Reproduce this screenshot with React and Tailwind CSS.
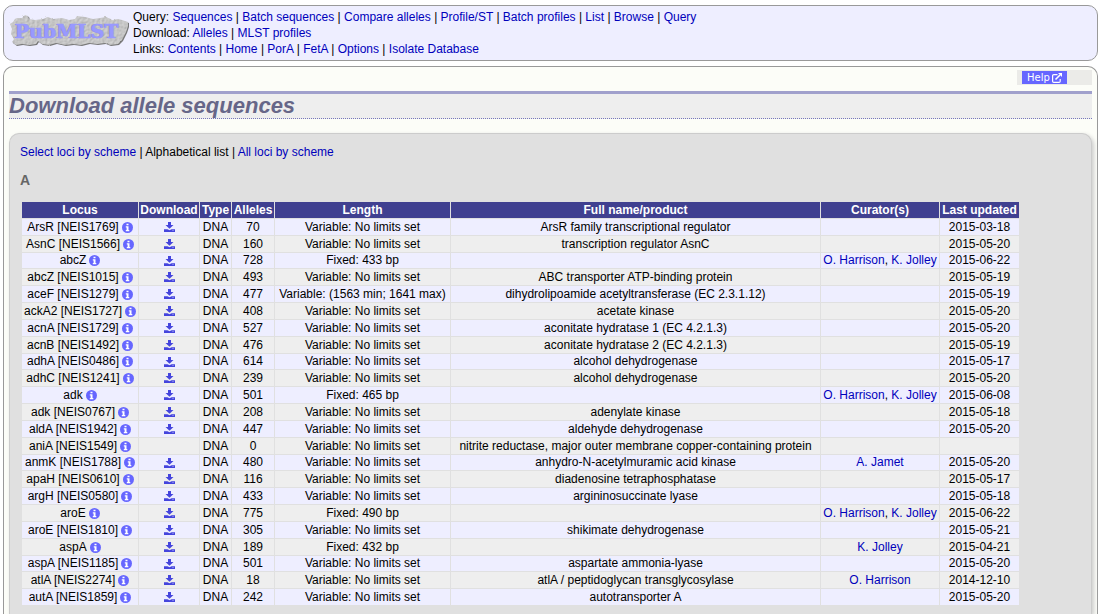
const menu = [
  ['Query', ['Sequences', 'Batch sequences', 'Compare alleles', 'Profile/ST', 'Batch profiles', 'List', 'Browse', 'Query']],
  ['Download', ['Alleles', 'MLST profiles']],
  ['Links', ['Contents', 'Home', 'PorA', 'FetA', 'Options', 'Isolate Database']],
]

const columns = [
  ['Locus', 'w-[116px]'],
  ['Download', 'w-[60px]'],
  ['Type', 'w-[31px]'],
  ['Alleles', 'w-[42px]'],
  ['Length', 'w-[175px]'],
  ['Full name/product', 'w-[369px]'],
  ['Curator(s)', 'w-[118px]'],
  ['Last updated', 'w-[79px]'],
]

const any = 'Variable: No limits set'

// locus, alleles, length, product, curators, updated
const loci = [
  ['ArsR [NEIS1769]', 70, any, 'ArsR family transcriptional regulator', [], '2015-03-18'],
  ['AsnC [NEIS1566]', 160, any, 'transcription regulator AsnC', [], '2015-05-20'],
  ['abcZ', 728, 'Fixed: 433 bp', '', ['O. Harrison', 'K. Jolley'], '2015-06-22'],
  ['abcZ [NEIS1015]', 493, any, 'ABC transporter ATP-binding protein', [], '2015-05-19'],
  ['aceF [NEIS1279]', 477, 'Variable: (1563 min; 1641 max)', 'dihydrolipoamide acetyltransferase (EC 2.3.1.12)', [], '2015-05-19'],
  ['ackA2 [NEIS1727]', 408, any, 'acetate kinase', [], '2015-05-20'],
  ['acnA [NEIS1729]', 527, any, 'aconitate hydratase 1 (EC 4.2.1.3)', [], '2015-05-20'],
  ['acnB [NEIS1492]', 476, any, 'aconitate hydratase 2 (EC 4.2.1.3)', [], '2015-05-19'],
  ['adhA [NEIS0486]', 614, any, 'alcohol dehydrogenase', [], '2015-05-17'],
  ['adhC [NEIS1241]', 239, any, 'alcohol dehydrogenase', [], '2015-05-20'],
  ['adk', 501, 'Fixed: 465 bp', '', ['O. Harrison', 'K. Jolley'], '2015-06-08'],
  ['adk [NEIS0767]', 208, any, 'adenylate kinase', [], '2015-05-18'],
  ['aldA [NEIS1942]', 447, any, 'aldehyde dehydrogenase', [], '2015-05-20'],
  ['aniA [NEIS1549]', 0, any, 'nitrite reductase, major outer membrane copper-containing protein', [], ''],
  ['anmK [NEIS1788]', 480, any, 'anhydro-N-acetylmuramic acid kinase', ['A. Jamet'], '2015-05-20'],
  ['apaH [NEIS0610]', 116, any, 'diadenosine tetraphosphatase', [], '2015-05-17'],
  ['argH [NEIS0580]', 433, any, 'argininosuccinate lyase', [], '2015-05-18'],
  ['aroE', 775, 'Fixed: 490 bp', '', ['O. Harrison', 'K. Jolley'], '2015-06-22'],
  ['aroE [NEIS1810]', 305, any, 'shikimate dehydrogenase', [], '2015-05-21'],
  ['aspA', 189, 'Fixed: 432 bp', '', ['K. Jolley'], '2015-04-21'],
  ['aspA [NEIS1185]', 501, any, 'aspartate ammonia-lyase', [], '2015-05-20'],
  ['atlA [NEIS2274]', 18, any, 'atlA / peptidoglycan transglycosylase', ['O. Harrison'], '2014-12-10'],
  ['autA [NEIS1859]', 242, any, 'autotransporter A', [], '2015-05-20'],
]

function Link({ children }) {
  return <a href="#" className="text-[#0000bb] hover:underline">{children}</a>
}

function Logo() {
  const stone = 'M6 6 L8 5 L13 5 L16 2 L19 3 L20 6 L26 7 L34 6 L39 4 L44 6 L53 5 L60 7 L66 6 L68 3 L76 4 L84 6 L91 5 L97 4 L104 7 L109 6 L113 7 L119 9 L119 13 L117 19 L113 27 L109 31 L101 32 L96 30 L88 31 L80 30 L72 32 L64 31 L56 32 L47 30 L40 32 L33 31 L29 28 L27 31 L20 32 L13 31 L7 32 L3 29 L5 26 L2 21 L3 16 L1 11 L4 9 Z'
  return (
    <svg viewBox="0 0 120 36" className="h-9 w-[120px]" role="img" aria-label="PubMLST">
      <filter id="grain" x="-5%" y="-10%" width="110%" height="125%" colorInterpolationFilters="sRGB">
        <feTurbulence type="fractalNoise" baseFrequency="0.4" numOctaves="2" seed="4" result="noise" />
        <feDisplacementMap in="SourceGraphic" in2="noise" scale="2" result="rough" />
        <feDiffuseLighting in="noise" surfaceScale="0.4" lightingColor="#e4e4e4" result="light">
          <feDistantLight azimuth="225" elevation="60" />
        </feDiffuseLighting>
        <feComposite in="light" in2="rough" operator="in" />
      </filter>
      <path d={stone} fill="#777777" transform="translate(1 1)" />
      <path d={stone} fill="#c4c4c4" filter="url(#grain)" />
      <g fontFamily="'DejaVu Serif', serif" fontWeight="bold" fontSize="19">
        <text x="5" y="25" fill="#8888aa">PubMLST</text>
        <text x="6" y="25" fill="#9999ff" stroke="#9999ff" strokeWidth="0.5">PubMLST</text>
      </g>
    </svg>
  )
}

function InfoIcon() {
  return (
    <svg viewBox="0 0 11 11" className="size-[11px]" aria-hidden="true">
      <circle cx="5.5" cy="5.5" r="5.5" fill="#6666ff" />
      <path d="M4.5 1.7h2v1.6h-2zM3.8 4.3h2.7V8h.8v1.200H3.800V8h.8V5.500h-.8z" fill="#fff" />
    </svg>
  )
}

function DownloadIcon() {
  return (
    <svg viewBox="0 0 11 10" className="h-2.5 w-[11px]" fill="#4444dd" aria-hidden="true">
      <path d="M4 0h3v3h2.5l-4 3.8L1.500 3H4z" />
      <path d="M0 7.300h3.500l2 1 2-1H11V10H0z" />
      <path d="M8.500 8.300h1v.7h-1z" fill="#ccccff" />
    </svg>
  )
}

function ExternalIcon() {
  return (
    <svg viewBox="0 0 10 10" className="size-2.5" fill="none" stroke="#fff" aria-hidden="true">
      <path d="M5.500 1.600H1.800Q.6 1.600.6 2.800v5.400Q.6 9.400 1.800 9.400H7Q8.200 9.400 8.200 8.200V6" strokeWidth="1.200" />
      <path d="M3.500 6.500 8 2" strokeWidth="1.600" />
      <path d="M6 0h4v4z" fill="#fff" stroke="none" />
    </svg>
  )
}

function LocusRow({ locus }) {
  const [name, alleles, length, product, curators, updated] = locus
  return (
    <tr className="h-4 odd:bg-[#eeeeff] even:bg-[#eeeeee] nth-[6n+3]:h-[15px]">
      <td className="p-0">
        <span className="flex items-center justify-center gap-[3px]">
          {name}
          <a href="#" aria-label={`${name} information`}>
            <InfoIcon />
          </a>
        </span>
      </td>
      <td className="p-0">
        {updated && (
          <a href="#" aria-label={`Download ${name}`} className="flex justify-center">
            <DownloadIcon />
          </a>
        )}
      </td>
      <td className="p-0">DNA</td>
      <td className="p-0">{alleles}</td>
      <td className="p-0">{length}</td>
      <td className="p-0">{product}</td>
      <td className="p-0">
        {curators.map((curator, i) => (
          <span key={curator}>{i > 0 && ', '}<Link>{curator}</Link></span>
        ))}
      </td>
      <td className="p-0">{updated}</td>
    </tr>
  )
}

export default function App() {
  return (
    <div className="flex min-h-screen flex-col gap-[5px] bg-white px-[3px] pt-[5px] font-['Liberation_Sans',Arial,sans-serif] text-[12px] leading-4 text-black">
      <header className="flex gap-1 rounded-[10px] border border-[#999999] bg-[#eeeeff] px-[5px] py-[3px]">
        <a href="#" className="pt-1"><Logo /></a>
        <nav>
          {menu.map(([title, links]) => (
            <p key={title}>
              {title}:{' '}
              {links.map((link, i) => (
                <span key={link}>{i > 0 && ' | '}<Link>{link}</Link></span>
              ))}
            </p>
          ))}
        </nav>
      </header>

      <main className="flex grow flex-col rounded-t-[10px] border border-b-0 border-[#999999] bg-[#fcfdf8] px-[5px] pt-[3px]">
        <div className="flex w-[75px] self-end bg-[#ebebe8] px-[5px] py-px">
          <a href="#" className="flex h-[13px] items-center gap-0.5 bg-[#6666ff] px-[5px] font-['DejaVu_Sans',sans-serif] text-[10px] text-white">
            Help <ExternalIcon />
          </a>
        </div>

        <h1 className="mt-1.5 border-t-[3px] border-b border-t-[#a0a0cc] border-b-[#7777bb] [border-bottom-style:dotted] bg-[#eeeeee] text-[22px] leading-6 font-bold text-[#666688] italic">
          Download allele sequences
        </h1>

        <div className="mt-3.5 grow rounded-t-[10px] border border-b-0 border-[#cccccc] bg-[#e0e0e0] px-2.5 pt-2.5 pb-1 shadow-[2px_2px_4px_#cccccc]">
          <p>
            <Link>Select loci by scheme</Link> | Alphabetical list | <Link>All loci by scheme</Link>
          </p>
          <h2 className="mt-3 text-[14px] font-bold text-[#666666]">A</h2>
          <table className="mt-[13px] ml-px border-separate border-spacing-px text-center leading-[15px] whitespace-nowrap">
            <thead>
              <tr className="h-4 bg-[#404090] text-white">
                {columns.map(([label, width]) => (
                  <th key={label} scope="col" className={`${width} p-0`}>{label}</th>
                ))}
              </tr>
            </thead>
            <tbody>
              {loci.map(locus => <LocusRow key={locus[0]} locus={locus} />)}
            </tbody>
          </table>
        </div>
      </main>
    </div>
  )
}
